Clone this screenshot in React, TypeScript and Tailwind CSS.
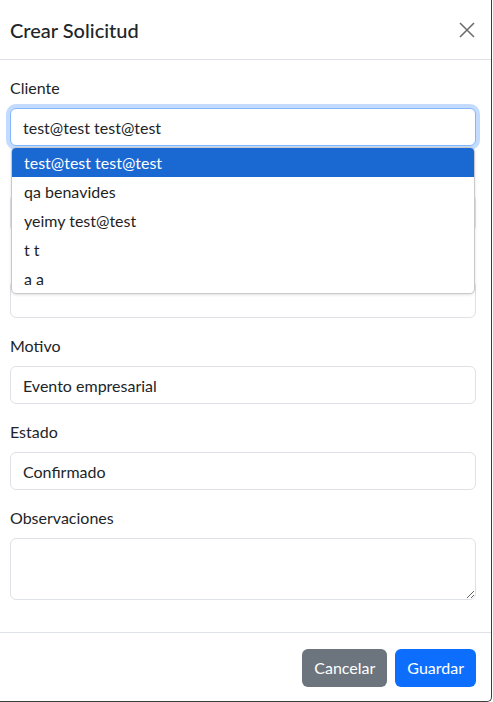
import React from 'react';

const font = { fontFamily: 'Lato, "Noto Sans", sans-serif' };

const options = ['test@test test@test', 'qa benavides', 'yeimy test@test', 't t', 'a a'];

// campos tapados por el desplegable: la etiqueta queda vacía
function Field({ label, value }: { label?: string; value?: string }) {
  return (
    <div className="mb-4">
      <label className="block mb-2 h-6 leading-6 text-[16px] text-[#212529]">{label}</label>
      <input
        readOnly
        value={value ?? ''}
        className="block w-full h-[38px] px-3 rounded-[6px] border border-[#dee2e6] bg-white text-[16px] text-[#212529] outline-none"
        style={font}
      />
    </div>
  );
}

export default function App() {
  return (
    <div className="bg-white" style={font}>
      <div className="w-[492px] h-[702px] bg-white border-r border-b border-[#3c3c3c] rounded-br-[5px] overflow-hidden">
        {/* Header */}
        <div className="h-[60px] border-b border-[#dee2e6] flex items-center justify-between pl-[10px] pr-[15px]">
          <h5 className="text-[20px] leading-[30px] font-medium text-[#212529]">Crear Solicitud</h5>
          <button className="w-4 h-4 mr-[1px] text-[#6e6e6e]">
            <svg viewBox="0 0 16 16" className="w-4 h-4" fill="none" stroke="currentColor" strokeWidth="1.6">
              <path d="M1 1 15 15M15 1 1 15" />
            </svg>
          </button>
        </div>

        {/* Body */}
        <div className="pt-4 pb-4 pl-[10px] pr-[15px]">
          <div className="mb-4">
            <label className="block mb-2 h-6 leading-6 text-[16px] text-[#212529]">Cliente</label>
            <div className="relative z-10">
              <input
                readOnly
                value="test@test test@test"
                className="block w-full h-[38px] px-3 rounded-[6px] border border-[#86b7fe] bg-white text-[16px] text-[#212529] outline-none shadow-[0_0_0_4px_rgba(13,110,253,0.25)]"
                style={font}
              />
              <div className="absolute top-[39px] left-[1px] right-[1px] bg-white border border-[#c9c9c9] rounded-[5px] overflow-hidden shadow-[0_1px_3px_rgba(0,0,0,0.12)]">
                {options.map((o, i) => (
                  <div
                    key={o}
                    className={`h-[29px] pl-3 flex items-center text-[16px] ${
                      i === 0 ? 'bg-[#1a68d2] text-white' : 'text-[#1f1f1f]'
                    }`}
                  >
                    {o}
                  </div>
                ))}
              </div>
            </div>
          </div>
          <Field />
          <Field />
          <Field label="Motivo" value="Evento empresarial" />
          <Field label="Estado" value="Confirmado" />
          <div className="mb-4">
            <label className="block mb-2 h-6 leading-6 text-[16px] text-[#212529]">Observaciones</label>
            <textarea
              readOnly
              className="block w-full h-[62px] px-3 py-1.5 rounded-[6px] border border-[#dee2e6] bg-white text-[16px] outline-none"
              style={font}
            />
          </div>
        </div>

        {/* Footer */}
        <div className="border-t border-[#dee2e6] pt-4 pr-[15px] flex justify-end gap-2">
          <button className="h-[38px] px-3 rounded-[6px] bg-[#6c757d] text-white text-[16px]">Cancelar</button>
          <button className="h-[38px] px-3 rounded-[6px] bg-[#0d6efd] text-white text-[16px]">Guardar</button>
        </div>
      </div>
    </div>
  );
}
